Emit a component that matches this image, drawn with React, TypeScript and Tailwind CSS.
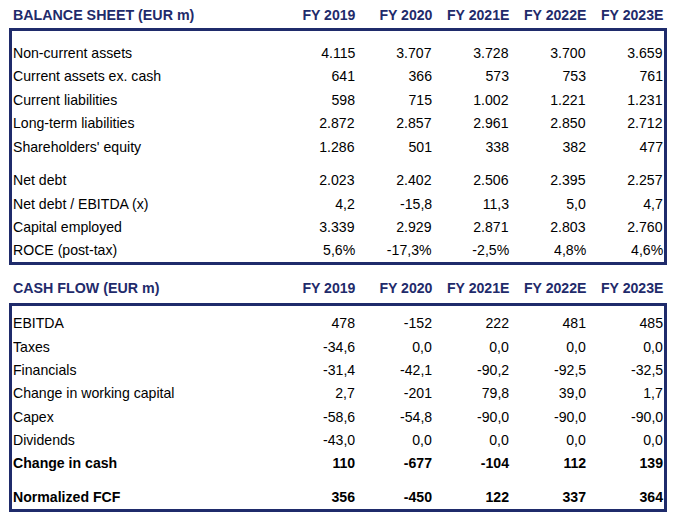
import React from "react";

type Row = { label: string; values: string[]; bold?: boolean; gapBefore?: boolean };

const years = ["FY 2019", "FY 2020", "FY 2021E", "FY 2022E", "FY 2023E"];

const balance: Row[] = [
  { label: "Non-current assets", values: ["4.115", "3.707", "3.728", "3.700", "3.659"] },
  { label: "Current assets ex. cash", values: ["641", "366", "573", "753", "761"] },
  { label: "Current liabilities", values: ["598", "715", "1.002", "1.221", "1.231"] },
  { label: "Long-term liabilities", values: ["2.872", "2.857", "2.961", "2.850", "2.712"] },
  { label: "Shareholders' equity", values: ["1.286", "501", "338", "382", "477"] },
  { label: "Net debt", values: ["2.023", "2.402", "2.506", "2.395", "2.257"], gapBefore: true },
  { label: "Net debt / EBITDA (x)", values: ["4,2", "-15,8", "11,3", "5,0", "4,7"] },
  { label: "Capital employed", values: ["3.339", "2.929", "2.871", "2.803", "2.760"] },
  { label: "ROCE (post-tax)", values: ["5,6%", "-17,3%", "-2,5%", "4,8%", "4,6%"] },
];

const cash: Row[] = [
  { label: "EBITDA", values: ["478", "-152", "222", "481", "485"] },
  { label: "Taxes", values: ["-34,6", "0,0", "0,0", "0,0", "0,0"] },
  { label: "Financials", values: ["-31,4", "-42,1", "-90,2", "-92,5", "-32,5"] },
  { label: "Change in working capital", values: ["2,7", "-201", "79,8", "39,0", "1,7"] },
  { label: "Capex", values: ["-58,6", "-54,8", "-90,0", "-90,0", "-90,0"] },
  { label: "Dividends", values: ["-43,0", "0,0", "0,0", "0,0", "0,0"] },
  { label: "Change in cash", values: ["110", "-677", "-104", "112", "139"], bold: true },
  { label: "Normalized FCF", values: ["356", "-450", "122", "337", "364"], bold: true, gapBefore: true },
];

function Header({ title }: { title: string }) {
  return (
    <div className="ml-[12px] w-[652px] flex h-[20px] leading-[20px] text-[15px] font-bold text-[#1f2b6b] pr-[1px]">
      <div className="flex-1 pl-[1px] whitespace-nowrap">
        <span className="inline-block scale-x-[0.95] origin-left">{title}</span>
      </div>
      {years.map((y) => (
        <div key={y} className="w-[77px] text-right whitespace-nowrap">
          <span className="inline-block scale-x-[0.94] origin-right">{y}</span>
        </div>
      ))}
    </div>
  );
}

function Box({ rows, pt }: { rows: Row[]; pt: string }) {
  return (
    <div className={`ml-[9px] w-[658px] border-[3px] border-[#1f2b6b] ${pt}`}>
      {rows.map((r) => (
        <div
          key={r.label}
          className={`flex h-[23.4px] leading-[23.4px] text-[15px] text-black pr-[1px] ${r.bold ? "font-bold" : ""} ${r.gapBefore ? "mt-[10.3px]" : ""}`}
        >
          <div className="flex-1 pl-[1px] whitespace-nowrap">
            <span className="inline-block scale-x-[0.94] origin-left">{r.label}</span>
          </div>
          {r.values.map((v, i) => (
            <div key={i} className="w-[77px] text-right whitespace-nowrap">
              <span className="inline-block scale-x-[0.94] origin-right">{v}</span>
            </div>
          ))}
        </div>
      ))}
    </div>
  );
}

export default function App() {
  return (
    <div
      className="w-[677px] h-[520px] bg-white overflow-hidden pt-[5px]"
      style={{ fontFamily: '"Liberation Sans", Arial, sans-serif' }}
    >
      <Header title="BALANCE SHEET (EUR m)" />
      <div className="h-[3px]" />
      <Box rows={balance} pt="pt-[10px]" />
      <div className="h-[13px]" />
      <Header title="CASH FLOW (EUR m)" />
      <div className="h-[5px]" />
      <Box rows={cash} pt="pt-[5.3px]" />
    </div>
  );
}
